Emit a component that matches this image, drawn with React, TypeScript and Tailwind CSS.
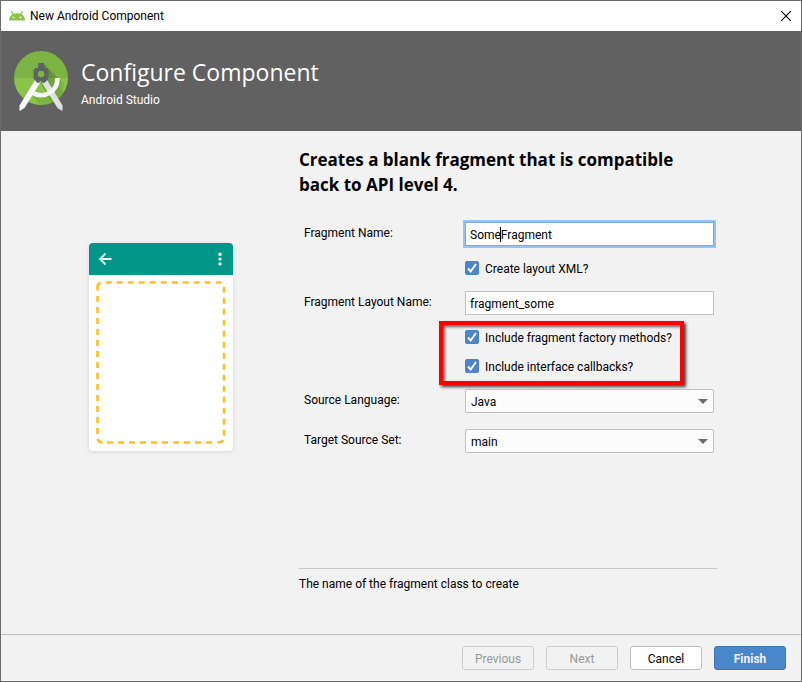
import { useState } from "react";
import type { ReactNode } from "react";

function AndroidHead() {
  return (
    <svg width="16" height="10" viewBox="0 0 16 10" aria-hidden="true">
      <path d="M0 9.500C0 5 3 2.200 8 2.200S16 5 16 9.500z" fill="#8bc34a" />
      <path d="M2.600 0.600 4.600 4M13.400 0.600 11.400 4" stroke="#8bc34a" strokeWidth="1.200" strokeLinecap="round" />
      <circle cx="4.500" cy="6.300" r="0.900" fill="#fff" />
      <circle cx="11.500" cy="6.300" r="0.900" fill="#fff" />
    </svg>
  );
}

function StudioLogo() {
  return (
    <svg width="54" height="60" viewBox="0 0 54 60" aria-hidden="true">
      <defs>
        <clipPath id="disc">
          <circle cx="27" cy="27" r="27" />
        </clipPath>
        <linearGradient id="shade" x1="0" y1="0" x2="1" y2="1">
          <stop offset="0" stopColor="#33691e" stopOpacity="0.6" />
          <stop offset="1" stopColor="#33691e" stopOpacity="0" />
        </linearGradient>
      </defs>
      <g clipPath="url(#disc)">
        <rect width="54" height="27" fill="#7cb342" />
        <rect y="27" width="54" height="27" fill="#8bc34a" />
        <path d="M30 13 50 33 48 54H38L27 32z" fill="url(#shade)" />
        <path d="M20 38Q27 46 44 36L50 42 38 54H26L18 44z" fill="#558b2f" opacity="0.25" />
      </g>
      <path d="M28 32 33 29 48.500 54.500V60L43.500 57z" fill="#e0e0e0" />
      <path d="M26 32 21 29 5.500 54.500V60L10.500 57z" fill="#fafafa" />
      <path d="M18 41.500C29 48 43.500 42 43.500 27" fill="none" stroke="#f5f5f5" strokeWidth="4.600" />
      <path
        d="M24 12h6v5h2.500L34.500 19v8.500L30.500 32h-1L27 29.500 24.500 32h-1L19.500 27.500V19l2-2H24z"
        fill="#5f6368"
      />
      <circle cx="27" cy="23" r="4" fill="#7cb342" stroke="#555a5e" />
    </svg>
  );
}

function FragmentPreview() {
  return (
    <svg
      width="144"
      height="208"
      viewBox="0 0 144 208"
      role="img"
      aria-label="Blank fragment"
      className="rounded-[4px] bg-white shadow-[0_1px_4px_rgba(0,0,0,0.12)]"
    >
      <rect width="144" height="32" fill="#009688" />
      <path d="M22.500 16H11.500M16.500 10.500 11 16l5.500 5.500" fill="none" stroke="#e6f5f3" strokeWidth="1.800" />
      <g fill="#fff">
        <circle cx="131" cy="11.300" r="1.700" />
        <circle cx="131" cy="16.100" r="1.700" />
        <circle cx="131" cy="20.900" r="1.700" />
      </g>
      <g fill="none" stroke="#ffc31f" strokeWidth="2.600" strokeDasharray="6 5">
        <path d="M16.700 39.500H133" />
        <path d="M135 43.700V193" />
        <path d="M18 199.500H124" />
        <path d="M8.500 53V192" />
      </g>
      <g fill="none" stroke="#ffc31f" strokeWidth="2.600">
        <path d="M8.500 47.500V44Q8.500 41 11.500 39.700" />
        <path d="M8.500 196Q9.500 199.200 13.500 199.500" />
        <path d="M128.500 199.500Q133 199.500 134 197" />
      </g>
    </svg>
  );
}

function CheckField({ id, children }: { id: string; children: ReactNode }) {
  const [on, setOn] = useState(true);
  return (
    <div className="flex h-[14px] items-center gap-[6px]">
      <span className="relative flex">
        <input
          id={id}
          type="checkbox"
          checked={on}
          onChange={() => setOn(!on)}
          className="size-[14px] appearance-none rounded-[2px] border border-[#b0b0b0] bg-white checked:border-[#4a84c8] checked:bg-[#4a86ca]"
        />
        {on && (
          <svg
            width="14"
            height="14"
            viewBox="0 0 14 14"
            aria-hidden="true"
            className="pointer-events-none absolute inset-0"
          >
            <path d="M3 7.500 5.700 10.500 11 3" fill="none" stroke="#fff" strokeWidth="2" />
          </svg>
        )}
      </span>
      <label htmlFor={id} className="pt-[2px]">
        {children}
      </label>
    </div>
  );
}

function Select({ id, value }: { id: string; value: string }) {
  return (
    <div className="relative">
      <select
        id={id}
        defaultValue={value}
        className="block h-6 w-full appearance-none rounded-[2px] border border-[#c0c0c0] bg-[#fcfcfc] px-[5px] pt-[2px]"
      >
        <option>{value}</option>
      </select>
      <svg
        width="10"
        height="5"
        viewBox="0 0 10 5"
        aria-hidden="true"
        className="pointer-events-none absolute top-[10px] right-[6px]"
      >
        <path d="M0 0h10L5 5z" fill="#6e6e6e" />
      </svg>
    </div>
  );
}

function Row({ id, label, children }: { id: string; label: string; children: ReactNode }) {
  return (
    <div className="grid h-6 grid-cols-[161px_1fr] items-center">
      <label htmlFor={id} className="pb-[2px]">
        {label}
      </label>
      {children}
    </div>
  );
}

export default function App() {
  const [name, setName] = useState("SomeFragment");
  const [layout, setLayout] = useState("fragment_some");
  const button = "h-6 w-[72px] rounded-[3px] border pt-[2px]";

  return (
    <div className="flex min-h-screen flex-col border border-[#6b6b6b] bg-[#f2f2f2] font-[Roboto,'Open_Sans',sans-serif] text-[12px] leading-4 text-black">
      <div className="flex h-[30px] items-center gap-[5px] bg-white pr-[10px] pl-2">
        <AndroidHead />
        <span className="grow">New Android Component</span>
        <button type="button" aria-label="Close">
          <svg width="10" height="10" viewBox="0 0 10 10" aria-hidden="true">
            <path d="M0 0 10 10M10 0 0 10" stroke="#000" strokeWidth="1.100" />
          </svg>
        </button>
      </div>

      <header className="flex h-[100px] items-center gap-[13px] bg-[#616161] pl-[13px] text-white">
        <StudioLogo />
        <div className="flex flex-col gap-1 pt-[2px]">
          <h1 className="font-['Open_Sans',sans-serif] text-[23px] leading-8">Configure Component</h1>
          <p>Android Studio</p>
        </div>
      </header>

      <main className="flex grow">
        <div className="flex w-[298px] shrink-0 justify-center pt-[112px] pl-[22px]">
          <FragmentPreview />
        </div>
        <div className="mr-[84px] flex grow flex-col pt-4">
          <h2 className="font-['Open_Sans',sans-serif] text-[17px] leading-[25px] font-bold">
            Creates a blank fragment that is compatible
            <br />
            back to API level 4.
          </h2>
          <form className="mt-[25px] flex flex-col pr-[3px] pl-[5px]">
            <Row id="name" label="Fragment Name:">
              <div className="relative">
                <input
                  id="name"
                  value={name}
                  onChange={(e) => setName(e.target.value)}
                  className="block h-6 w-full border border-[#7ba7dc] bg-white px-1 pt-[2px] outline-2 outline-[#97c3f3]"
                />
                <span className="absolute top-[5px] left-[35px] h-[15px] w-px bg-black" />
              </div>
            </Row>
            <div className="mt-[15px] pl-[161px]">
              <CheckField id="xml">Create layout XML?</CheckField>
            </div>
            <div className="mt-4">
              <Row id="layout" label="Fragment Layout Name:">
                <input
                  id="layout"
                  value={layout}
                  onChange={(e) => setLayout(e.target.value)}
                  className="block h-6 w-full border border-[#c0c0c0] bg-white px-1 pt-[2px]"
                />
              </Row>
            </div>
            <div className="relative mt-[15px] ml-[161px] flex flex-col gap-[15px]">
              <CheckField id="factory">Include fragment factory methods?</CheckField>
              <CheckField id="callbacks">Include interface callbacks?</CheckField>
              <div className="pointer-events-none absolute -top-[9px] -left-[26px] h-16 w-[245px] border-4 border-[#fe0000] shadow-[2px_2px_3px_rgba(0,0,0,0.75),inset_2px_2px_3px_rgba(0,0,0,0.6)]" />
            </div>
            <div className="mt-4 flex flex-col gap-4">
              <Row id="language" label="Source Language:">
                <Select id="language" value="Java" />
              </Row>
              <Row id="target" label="Target Source Set:">
                <Select id="target" value="main" />
              </Row>
            </div>
          </form>
          <p className="mt-auto mb-[42px] border-t border-[#c9c9c9] pt-[7px]">
            The name of the fragment class to create
          </p>
        </div>
      </main>

      <footer className="flex h-[47px] items-center justify-end gap-3 border-t border-[#bfbfbf] pr-[15px]">
        <button type="button" disabled className={`${button} border-[#cfcfcf] text-[#9a9a9a]`}>
          Previous
        </button>
        <button type="button" disabled className={`${button} border-[#cfcfcf] text-[#9a9a9a]`}>
          Next
        </button>
        <button type="button" className={`${button} border-[#bdbdbd] bg-white`}>
          Cancel
        </button>
        <button type="button" className={`${button} border-[#3d75b8] bg-[#4a86ca] font-bold text-[#eef3fa]`}>
          Finish
        </button>
      </footer>
    </div>
  );
}
